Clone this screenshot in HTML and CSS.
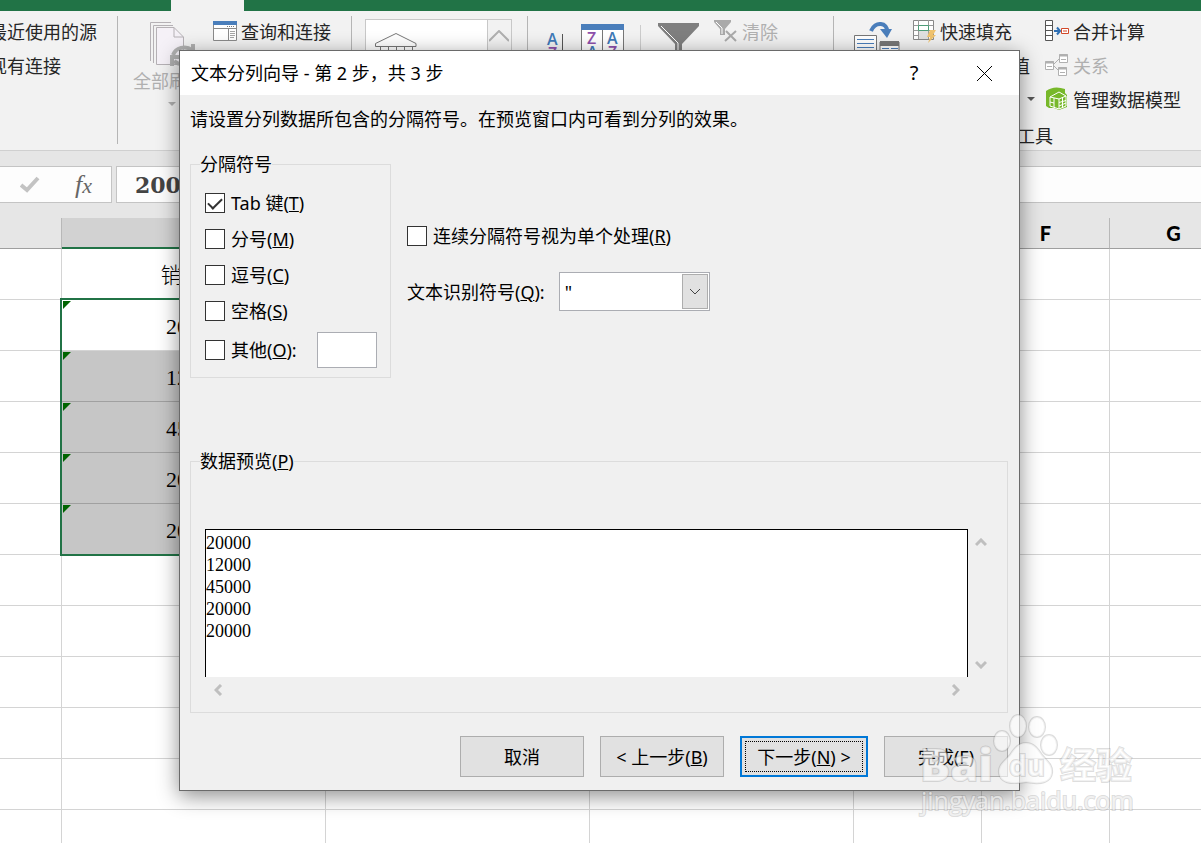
FILE: index.html
```html
<!DOCTYPE html>
<html lang="zh-CN">
<head>
    <meta charset="UTF-8">
    <meta name="viewport" content="width=device-width, initial-scale=1.0">
    <title>文本分列向导</title>
    <link rel="stylesheet" href="styles.css">
</head>
<body>
    <div class="workbook">
        <div class="tab-strip"><span class="active-tab"></span></div>

        <!-- Ribbon -->
        <div class="ribbon">
            <div class="group group-source">
                <button class="cmd">最近使用的源</button>
                <button class="cmd">现有连接</button>
            </div>

            <div class="group group-connect">
                <button class="cmd-big disabled">
                    <svg width="46" height="48" viewBox="0 0 46 48" fill="none" stroke="#b5b1b5" stroke-width="1">
                        <path d="M1.500 41V2.500H22M4.500 43V5.500H24" />
                        <path d="M7.500 44.500V7.500H25L34.500 17V44.500Z" fill="#f5f1f7" />
                        <path d="M25 7.500V17H34" />
                        <path d="M24 35a12 11 0 0 1 19-5M44 24v9h-9" stroke-width="4" stroke="#b0b0b0" />
                        <path d="M44 38a12 11 0 0 1-19 3M23 46v-9h9" stroke-width="4" stroke="#b0b0b0" />
                    </svg>
                    <span>全部刷新</span>
                    <i class="caret"></i>
                </button>
                <button class="cmd">
                    <svg width="24" height="20" viewBox="0 0 24 20" fill="none">
                        <path d="M.5 .5h23v19H.5z" fill="#fff" stroke="#8a8a8a" />
                        <path d="M0 0h24v4H0z" fill="#4a7ebb" />
                        <path d="M1 7.500h22M15.500 7v12" stroke="#8a8a8a" />
                        <path d="M14 5.500h8" stroke="#777" stroke-dasharray="1 1" />
                        <path d="M17 10.500h5M17 12.500h5M17 14.500h5M17 16.500h4" stroke="#a5a5a5" />
                    </svg>
                    查询和连接
                </button>
            </div>

            <div class="group group-types">
                <div class="gallery">
                    <svg width="42" height="32" viewBox="0 0 42 32" fill="#fff" stroke="#777">
                        <path d="M.5 10.500L21 .5l20 10v3H.5z" />
                        <path d="M5.500 14v18M13.500 14v18M21.500 14v18M29.500 14v18M37.500 14v18" />
                    </svg>
                    <button class="gallery-up" title="上一行">
                        <svg width="20" height="12" viewBox="0 0 20 12" fill="none" stroke="#b0b0b0" stroke-width="2"><path d="M0 11L10 1l10 10" /></svg>
                    </button>
                </div>
            </div>

            <div class="group group-sort">
                <svg class="icon-az" width="22" height="40" viewBox="0 0 22 40">
                    <text x="1" y="13" class="letter blue">A</text>
                    <text x="2" y="27" class="letter purple">Z</text>
                    <path d="M16.500 2v34M12.500 18l4 4 4-4" stroke="#555" fill="none" />
                </svg>
                <svg class="icon-sort" width="44" height="44" viewBox="0 0 44 44">
                    <path d="M.5 .5h42v42H.5z" fill="#fff" stroke="#777" />
                    <path d="M0 0h43v6H0z" fill="#4a7ebb" />
                    <path d="M21.500 6v38" stroke="#777" />
                    <text x="6" y="20" class="letter purple">Z</text>
                    <text x="26" y="20" class="letter blue">A</text>
                    <text x="6" y="34" class="letter blue">A</text>
                    <text x="27" y="34" class="letter purple">Z</text>
                </svg>
                <span class="divider"></span>
                <svg class="icon-funnel" width="42" height="42" viewBox="0 0 42 42">
                    <path d="M0 0h41v3L24 21v21h-7V21L0 3z" fill="#7f7f7f" />
                    <path d="M3 3l17 17v20" fill="none" stroke="#fff" />
                </svg>
                <button class="cmd disabled">
                    <svg width="24" height="24" viewBox="0 0 24 24" fill="none">
                        <path d="M0 1h17v2l-6 7v6H6v-6L0 3z" fill="#aaa" />
                        <path d="M2 3l6 6v6" stroke="#fff" />
                        <path d="M12 12l10 10M22 12L11 22" stroke="#aaa" stroke-width="2" />
                    </svg>
                    清除
                </button>
            </div>

            <div class="group-tools">
                <div class="tools-row">
                    <svg class="icon-split" width="46" height="46" viewBox="0 0 46 46" fill="none">
                        <path d="M.5 13.500h22v30H.5z" fill="#fff" stroke="#777" />
                        <path d="M3 17.500h17M3 21.500h17M3 25.500h17" stroke="#4a7ebb" />
                        <path d="M26 20h19v24H26z" fill="#fff" stroke="#777" />
                        <path d="M26 19h19v5H26z" fill="#777" />
                        <path d="M28 26.500h7M37 26.500h7" stroke="#4a7ebb" />
                        <path d="M17 9C21-1 34 0 33 10" stroke="#4a7ebb" stroke-width="4" />
                        <path d="M26 7l7 9 5-9z" fill="#4a7ebb" />
                    </svg>
                    <div class="cmd-column">
                        <button class="cmd">
                            <svg width="23" height="24" viewBox="0 0 23 24" fill="none">
                                <path d="M.5 1.500h20v19H.5z" fill="#fff" stroke="#888" />
                                <path d="M.5 6.500h20M.5 11.500h20M.5 16.500h14M5.500 1v19M15.500 1v19" stroke="#999" />
                                <path d="M5.500 6.500h10v5h-10z" fill="#fff" stroke="#4d9d78" />
                                <path d="M6 12h9v8H6z" fill="#e0e0e0" />
                                <path d="M17 11h6l-3 5h3l-8 8 2-6h-3z" fill="#f0c36d" />
                            </svg>
                            快速填充
                        </button>
                        <button class="cmd"><i class="blank"></i>删除重复值</button>
                        <button class="cmd"><i class="blank"></i>数据验证<i class="caret dark"></i></button>
                    </div>
                    <div class="cmd-column">
                        <button class="cmd">
                            <svg width="24" height="22" viewBox="0 0 24 22" fill="none">
                                <path d="M.5 .5h7v20h-7zM0 5.500h8M0 10.500h8M0 15.500h8" fill="#fff" stroke="#555" />
                                <path d="M9 11h6M12 7.500l3 3.500-3 3.500" stroke="#2e6fb4" stroke-width="2" />
                                <path d="M16.500 8.500h7v5h-7zM18 11h4" fill="#fff" stroke="#d2492a" />
                            </svg>
                            合并计算
                        </button>
                        <button class="cmd disabled">
                            <svg width="24" height="22" viewBox="0 0 24 22" fill="none" stroke="#b0b0b0">
                                <path d="M8 11l6-6M8 11l6 6" />
                                <path d="M.5 7.500h8v8h-8zM14.500 .5h8v8h-8zM13.500 13.500h8v8h-8z" fill="#fff" />
                                <path d="M0 8.500h9M14 1.500h9M13 14.500h9" stroke-width="2" />
                                <path d="M2 12.500h5M16 5.500h5M15 18.500h5" />
                            </svg>
                            关系
                        </button>
                        <button class="cmd">
                            <svg width="24" height="24" viewBox="0 0 24 24" fill="none">
                                <path d="M1 4Q9-2 20 2v4l2 2v12l-8 3-5-2H4L1 19z" fill="#77b82a" />
                                <path d="M5 10l9-5 7 4v10l-7 3-9-3zM5 10l9 2 7-3M14 12v10M17.500 11v10M9 11v9M14 15.500l7-2M14 19l7-3M5 15l4 1" stroke="#fff" />
                            </svg>
                            管理数据模型
                        </button>
                    </div>
                </div>
                <div class="group-label">数据工具</div>
            </div>
        </div>

        <!-- Formula bar -->
        <div class="formula-bar">
            <div class="formula-actions">
                <svg width="20" height="17" viewBox="0 0 20 17" fill="none" stroke="#c3c3c3" stroke-width="4"><path d="M1 9l6 5L18 2" /></svg>
                <span class="fx">f<small>x</small></span>
            </div>
            <div class="formula-value">20000</div>
        </div>

        <!-- Sheet -->
        <table class="sheet">
            <colgroup>
                <col class="col-edge"><col class="col-wide"><col class="col-wide"><col class="col-wide">
                <col class="col-std"><col class="col-std"><col class="col-std">
            </colgroup>
            <thead>
                <tr><th></th><th class="current"></th><th></th><th></th><th></th><th>F</th><th>G</th></tr>
            </thead>
            <tbody>
                <tr><td></td><td>销售额</td><td></td><td></td><td></td><td></td><td></td></tr>
                <tr><td></td><td class="flag active">20000</td><td></td><td></td><td></td><td></td><td></td></tr>
                <tr><td></td><td class="flag selected">12000</td><td></td><td></td><td></td><td></td><td></td></tr>
                <tr><td></td><td class="flag selected">45000</td><td></td><td></td><td></td><td></td><td></td></tr>
                <tr><td></td><td class="flag selected">20000</td><td></td><td></td><td></td><td></td><td></td></tr>
                <tr><td></td><td class="flag selected">20000</td><td></td><td></td><td></td><td></td><td></td></tr>
                <tr><td></td><td></td><td></td><td></td><td></td><td></td><td></td></tr>
                <tr><td></td><td></td><td></td><td></td><td></td><td></td><td></td></tr>
                <tr><td></td><td></td><td></td><td></td><td></td><td></td><td></td></tr>
                <tr><td></td><td></td><td></td><td></td><td></td><td></td><td></td></tr>
                <tr><td></td><td></td><td></td><td></td><td></td><td></td><td></td></tr>
                <tr><td></td><td></td><td></td><td></td><td></td><td></td><td></td></tr>
            </tbody>
        </table>
    </div>

    <!-- Text to columns wizard -->
    <form class="dialog" role="dialog" aria-labelledby="dialogTitle">
        <div class="title-bar">
            <h1 id="dialogTitle">文本分列向导 - 第 2 步，共 3 步</h1>
            <button type="button" class="title-btn">?</button>
            <button type="button" class="title-btn" title="关闭">
                <svg width="17" height="17" viewBox="0 0 17 17" stroke="#000" fill="none"><path d="M1 1l15 15M16 1L1 16" /></svg>
            </button>
        </div>
        <div class="dialog-body">
            <p>请设置分列数据所包含的分隔符号。在预览窗口内可看到分列的效果。</p>

            <div class="options">
                <fieldset class="delimiters">
                    <legend>分隔符号</legend>
                    <label class="check"><input type="checkbox" checked><span>Tab 键(<u>T</u>)</span></label>
                    <label class="check"><input type="checkbox"><span>分号(<u>M</u>)</span></label>
                    <label class="check"><input type="checkbox"><span>逗号(<u>C</u>)</span></label>
                    <label class="check"><input type="checkbox"><span>空格(<u>S</u>)</span></label>
                    <div class="other-row">
                        <label class="check"><input type="checkbox"><span>其他(<u>O</u>):</span></label>
                        <input type="text" class="other-input" aria-label="其他分隔符号">
                    </div>
                </fieldset>

                <div class="qualifier">
                    <label class="check"><input type="checkbox"><span>连续分隔符号视为单个处理(<u>R</u>)</span></label>
                    <div class="qualifier-row">
                        <label for="qualifier">文本识别符号(<u>Q</u>):</label>
                        <div class="select-box">
                            <select id="qualifier">
                                <option>"</option>
                            </select>
                            <span class="select-arrow">
                                <svg width="12" height="7" viewBox="0 0 12 7" stroke="#444" fill="none"><path d="M1 1l5 5 5-5" /></svg>
                            </span>
                        </div>
                    </div>
                </div>
            </div>

            <fieldset class="preview">
                <legend>数据预览(<u>P</u>)</legend>
                <div class="preview-row">
                    <div class="preview-data">
                        <div>20000</div>
                        <div>12000</div>
                        <div>45000</div>
                        <div>20000</div>
                        <div>20000</div>
                    </div>
                    <div class="scroll vertical">
                        <button type="button" title="向上"><svg width="12" height="9" viewBox="0 0 12 9"><path d="M1 7l5-5 5 5" /></svg></button>
                        <button type="button" title="向下"><svg width="12" height="9" viewBox="0 0 12 9"><path d="M1 2l5 5 5-5" /></svg></button>
                    </div>
                </div>
                <div class="scroll horizontal">
                    <button type="button" title="向左"><svg width="9" height="12" viewBox="0 0 9 12"><path d="M7 1L2 6l5 5" /></svg></button>
                    <button type="button" title="向右"><svg width="9" height="12" viewBox="0 0 9 12"><path d="M2 1l5 5-5 5" /></svg></button>
                </div>
            </fieldset>

            <div class="buttons">
                <button type="button" class="btn">取消</button>
                <button type="button" class="btn">&lt; 上一步(<u>B</u>)</button>
                <button type="button" class="btn primary">下一步(<u>N</u>) &gt;</button>
                <button type="button" class="btn">完成(<u>F</u>)</button>
            </div>
        </div>
    </form>

    <svg class="watermark" width="230" height="116" viewBox="0 0 230 116">
        <ellipse cx="106" cy="18" rx="8" ry="11" />
        <ellipse cx="125" cy="19" rx="8" ry="10" />
        <ellipse cx="90" cy="33" rx="8" ry="10" />
        <ellipse cx="137" cy="37" rx="8" ry="10" />
        <path d="M114 35c8 0 12 6 16 12 5 6 11 10 10 18-1 9-10 12-26 9-17 3-26 0-27-9-1-8 6-12 11-18 4-6 8-12 16-12z" />
        <text x="8" y="73" class="mark-brand">Bai</text>
        <text x="97" y="68" class="mark-du">du</text>
        <text x="148" y="71" class="mark-cn">经验</text>
        <text x="9" y="102" class="mark-url">jingyan.baidu.com</text>
    </svg>
</body>
</html>
```
FILE: styles.css
```css
:root {
    --green: #217346;
    --ribbon: #f2f2f2;
    --chrome: #e6e6e6;
    --grid: #d4d4d4;
    --face: #f0f0f0;
    --ui: "Noto Sans", "Noto Sans CJK SC", sans-serif;
}

* {
    margin: 0;
    padding: 0;
    box-sizing: border-box;
}

body {
    height: 100vh;
    overflow: hidden;
    position: relative;
    font-family: var(--ui);
    font-size: 18px;
    line-height: 24px;
    color: #000;
    background: #fff;
}

button,
input,
select {
    font: inherit;
    color: inherit;
}

button {
    background: none;
    border: none;
    white-space: nowrap;
}

svg {
    display: block;
    flex: none;
}

.workbook {
    height: 100%;
    overflow: hidden;
}

.tab-strip {
    height: 11px;
    background: var(--green);
    padding-left: 171px;
}

.active-tab {
    display: block;
    width: 73px;
    height: 11px;
    background: var(--ribbon);
}

/* Ribbon */
.ribbon {
    display: flex;
    height: 140px;
    padding-top: 5px;
    background: var(--ribbon);
    border-bottom: 1px solid #d0d0d0;
    color: #262626;
    font-family: "Noto Sans CJK SC", sans-serif;
}

.group {
    display: flex;
    flex: none;
    align-items: flex-start;
    height: 128px;
    border-right: 1px solid #b5b5b5;
}

.cmd {
    display: flex;
    align-items: center;
    gap: 4px;
    height: 34px;
    padding-bottom: 4px;
}

.disabled {
    color: #b0b0b0;
}

.caret {
    border: 4px solid transparent;
    border-top-color: #b0b0b0;
    border-bottom: none;
}

.caret.dark {
    border-top-color: #555;
    margin-left: 11px;
}

.blank {
    width: 23px;
}

.group-source {
    flex-direction: column;
    width: 118px;
}

.group-source .cmd {
    margin-left: -11px;
}

.group-connect {
    width: 234px;
    padding-left: 15px;
    gap: 8px;
}

.cmd-big {
    display: flex;
    flex-direction: column;
    align-items: center;
    padding-top: 4px;
    width: 72px;
}

.cmd-big svg {
    margin-left: 6px;
}

.cmd-big .caret {
    margin: 10px 0 0 6px;
}

.group-types {
    width: 176px;
    padding: 3px 0 0 13px;
}

.gallery {
    display: flex;
    justify-content: space-between;
    width: 147px;
    height: 100px;
    padding-left: 9px;
    background: #fff;
    border: 1px solid #c8c8c8;
}

.gallery > svg {
    margin-top: 13px;
}

.gallery-up {
    width: 24px;
    height: 32px;
    padding-left: 1px;
    background: var(--ribbon);
    border-left: 1px solid #c8c8c8;
}

.group-sort {
    width: 306px;
    padding-left: 18px;
}

.icon-az {
    margin-top: 16px;
}

.letter {
    font: 600 16px "Open Sans", sans-serif;
}

.blue {
    fill: #3f7ab8;
}

.purple {
    fill: #8e50ac;
}

.icon-sort {
    margin: 8px 0 0 13px;
}

.divider {
    width: 1px;
    height: 90px;
    margin: 9px 17px 0 15px;
    background: #ccc;
}

.icon-funnel {
    margin: 7px 14px 0 0;
}

.group-tools {
    flex: none;
    padding-left: 20px;
}

.tools-row {
    display: flex;
}

.icon-split {
    margin: 6px 13px 0 0;
}

.cmd-column {
    width: 132px;
}

.group-label {
    margin-top: 5px;
    padding-left: 127px;
}

/* Formula bar */
.formula-bar {
    display: flex;
    gap: 4px;
    padding: 15px 0;
    background: var(--chrome);
}

.formula-actions,
.formula-value {
    display: flex;
    align-items: center;
    height: 37px;
    background: #fdfdfd;
    border: 1px solid #c4c4c4;
}

.formula-actions {
    width: 112px;
    padding-left: 20px;
    gap: 35px;
    border-left: none;
}

.fx {
    font: italic 400 26px "Liberation Serif", serif;
    color: #666;
}

.fx small {
    font-size: 22px;
}

.formula-value {
    flex: 1;
    padding-left: 18px;
    border-right: none;
    font: 700 22px "DejaVu Serif", serif;
    color: #444;
}

/* Sheet */
.sheet {
    width: 1238px;
    table-layout: fixed;
    border-collapse: separate;
    border-spacing: 0;
    text-align: center;
}

.col-edge {
    width: 62px;
}

.col-wide {
    width: 264px;
}

.col-std {
    width: 128px;
}

.sheet th {
    height: 31px;
    background: var(--chrome);
    border-right: 1px solid #b8b8b8;
    border-bottom: 1px solid #9f9f9f;
    font: 900 20px "Lato", sans-serif;
}

.sheet th.current {
    background: #d2d2d2;
    border-bottom: 2px solid var(--green);
}

.sheet td {
    position: relative;
    height: 51px;
    padding-top: 4px;
    border-right: 1px solid var(--grid);
    border-bottom: 1px solid var(--grid);
    font: 300 22px/26px "Liberation Serif", "Noto Sans CJK SC", serif;
}

.sheet td.selected {
    background: #c6c6c6;
    border-bottom-color: #a0a0a0;
}

.flag::before {
    content: "";
    position: absolute;
    top: 1px;
    left: 1px;
    border-top: 8px solid #006400;
    border-right: 8px solid transparent;
}

/* frame round the five selected rows */
.sheet td.active::after {
    content: "";
    position: absolute;
    z-index: 1;
    box-sizing: border-box;
    top: -2px;
    left: -2px;
    width: 267px;
    height: 258px;
    border: 2px solid var(--green);
}

/* Dialog */
.dialog {
    position: absolute;
    z-index: 2;
    top: 50px;
    left: 179px;
    width: 841px;
    background: var(--face);
    border: 1px solid #6a6a6a;
    box-shadow: 0 5px 20px rgba(0, 0, 0, 0.45);
}

.title-bar {
    display: flex;
    align-items: center;
    height: 44px;
    padding-left: 11px;
    background: #fff;
}

.title-bar h1 {
    flex: 1;
    font-size: 18px;
    font-weight: 400;
}

.title-btn {
    display: flex;
    align-items: center;
    justify-content: center;
    width: 70px;
    height: 44px;
    font-size: 20px;
}

.dialog-body {
    padding: 12px 11px 13px 10px;
}

.options {
    display: flex;
    align-items: flex-start;
    gap: 16px;
    margin: 21px 0 71px;
}

fieldset {
    border: 1px solid #dcdcdc;
}

legend {
    margin-left: -5px;
}

.delimiters {
    width: 201px;
    padding: 9px 13px 9px 14px;
}

.check {
    display: flex;
    align-items: center;
    gap: 6px;
    height: 36px;
    white-space: nowrap;
}

.check input {
    appearance: none;
    flex: none;
    width: 20px;
    height: 20px;
    background: #fff;
    border: 1px solid #333;
}

.check input:checked::before {
    content: "";
    display: block;
    box-sizing: border-box;
    width: 14px;
    height: 8px;
    margin: 4px 0 0 2px;
    border: 2px solid #333;
    border-top: none;
    border-right: none;
    transform: rotate(-45deg);
}

.other-row {
    display: flex;
    justify-content: space-between;
    margin-top: 3px;
}

.other-input {
    width: 60px;
    height: 36px;
    padding: 0 6px;
    background: #fff;
    border: 1px solid #abadb3;
}

.qualifier {
    padding-top: 66px;
}

.qualifier-row {
    display: flex;
    align-items: center;
    gap: 14px;
    margin-top: 18px;
}

.select-box {
    position: relative;
    width: 151px;
    height: 39px;
}

.select-box select {
    appearance: none;
    width: 100%;
    height: 100%;
    padding-left: 5px;
    background: #fff;
    border: 1px solid #abadb3;
    border-radius: 0;
}

.select-arrow {
    position: absolute;
    top: 2px;
    right: 2px;
    bottom: 2px;
    display: flex;
    align-items: center;
    justify-content: center;
    width: 26px;
    background: #e1e1e1;
    border: 1px solid #adadad;
    pointer-events: none;
}

.preview {
    padding: 56px 13px 9px 14px;
}

.preview-row {
    display: flex;
}

.preview-data {
    flex: 1;
    height: 148px;
    padding-top: 2px;
    background: #fff;
    border: 1px solid #000;
    border-bottom: none;
    font: 400 18px/22px "Liberation Serif", serif;
}

.scroll {
    display: flex;
    justify-content: space-between;
}

.scroll button {
    display: flex;
    align-items: center;
    justify-content: center;
    width: 26px;
    height: 26px;
}

.scroll path {
    fill: none;
    stroke: #bfbfbf;
    stroke-width: 3;
}

.vertical {
    flex-direction: column;
}

.horizontal {
    padding-right: 26px;
}

.buttons {
    display: flex;
    justify-content: flex-end;
    gap: 16px;
    margin-top: 23px;
}

.btn {
    width: 124px;
    height: 41px;
    background: #e1e1e1;
    border: 1px solid #adadad;
}

.btn.primary {
    width: 128px;
    border: 2px solid #0078d7;
    outline: 1px dotted #000;
    outline-offset: -6px;
}

/* Site mark over the lower right corner */
.watermark {
    position: absolute;
    z-index: 3;
    top: 708px;
    left: 912px;
    fill: rgba(255, 255, 255, 0.6);
    stroke: rgba(140, 140, 140, 0.3);
    stroke-width: 2;
    paint-order: stroke;
    pointer-events: none;
}

.mark-brand {
    font: 800 45px "Open Sans", sans-serif;
}

.mark-du {
    font: 700 28px "Open Sans", sans-serif;
}

.mark-cn {
    font: 700 36px "Noto Sans CJK SC", sans-serif;
}

.mark-url {
    font: 400 25px "Open Sans", sans-serif;
}
```
